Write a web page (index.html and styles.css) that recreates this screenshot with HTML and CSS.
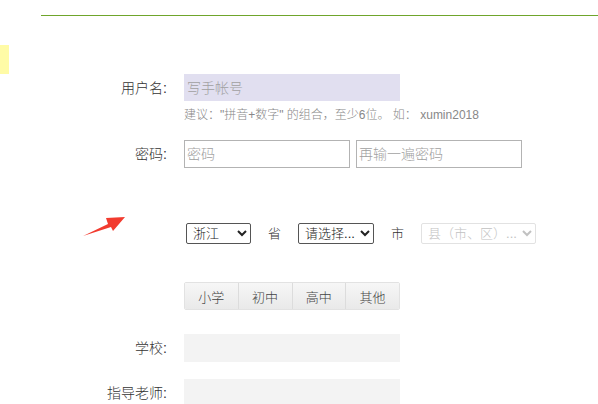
FILE: index.html
```html
<!DOCTYPE html>
<html lang="zh-CN">
<head>
<meta charset="utf-8">
<title>注册</title>
<link rel="stylesheet" href="styles.css">
</head>
<body>
<header class="topbar"><div class="topbar-line"></div></header>
<div class="page">
  <aside class="side"><div class="side-tab"></div></aside>
  <form class="form">
    <div class="row row-user">
      <label class="label">用户名:</label>
      <input class="field field-user" type="text" placeholder="写手帐号">
    </div>
    <p class="hint">建议："拼音+数字" 的组合，至少6位。 如： xumin2018</p>
    <div class="row row-pass">
      <label class="label">密码:</label>
      <div class="pair">
        <input class="field field-pass" type="password" placeholder="密码">
        <input class="field field-pass" type="password" placeholder="再输一遍密码">
      </div>
    </div>
    <div class="row row-region">
      <span class="label"></span>
      <div class="region">
        <select class="sel sel-prov"><option>浙江</option></select>
        <span class="unit">省</span>
        <select class="sel sel-city"><option>请选择...</option></select>
        <span class="unit">市</span>
        <select class="sel sel-county" disabled><option>县（市、区）...</option></select>
      </div>
    </div>
    <div class="row row-grade">
      <span class="label"></span>
      <div class="grades">
        <button type="button" class="grade">小学</button>
        <button type="button" class="grade">初中</button>
        <button type="button" class="grade">高中</button>
        <button type="button" class="grade">其他</button>
      </div>
    </div>
    <div class="row row-school">
      <label class="label">学校:</label>
      <input class="field field-grey" type="text">
    </div>
    <div class="row row-teacher">
      <label class="label">指导老师:</label>
      <input class="field field-grey" type="text">
    </div>
  </form>
</div>
<svg class="arrow" width="48" height="25" viewBox="0 0 48 25" aria-hidden="true">
  <polygon points="3,22 28,10 26,4 45,3 33,17 31,13" fill="#f23b2f"/>
</svg>
</body>
</html>
```

FILE: styles.css
```css
html, body {
  margin: 0;
  padding: 0;
  background: #ffffff;
}
body {
  font-family: "Liberation Sans", "Noto Sans CJK SC", sans-serif;
  font-size: 13px;
  font-weight: 300;
  color: #333333;
  position: relative;
  height: 404px;
  overflow: hidden;
}
.topbar {
  margin-left: 41px;
  height: 16px;
  display: flex;
  flex-direction: column;
  justify-content: flex-end;
}
.topbar-line {
  height: 1px;
  background: #6fa52b;
}
.page {
  display: flex;
}
.side {
  width: 9px;
  flex: none;
}
.side-tab {
  margin-top: 29px;
  height: 29px;
  background: #fffba6;
}
.form {
  flex: 1;
  margin: 0;
}
.row {
  display: flex;
  align-items: center;
  gap: 17px;
}
.label {
  width: 158px;
  flex: none;
  text-align: right;
  font-size: 14px;
  line-height: 18px;
  color: #333333;
}
.field {
  box-sizing: border-box;
  font-family: inherit;
  font-weight: 300;
  font-size: 14px;
  color: #333;
  outline: none;
  margin: 0;
}
.field::placeholder {
  color: #a0a0a0;
}
.row-user { margin-top: 58px; }
.field-user {
  width: 216px;
  height: 27px;
  border: none;
  background: #e1dff0;
  padding: 0 3px;
}
.hint {
  margin: 6px 0 0 175px;
  font-size: 12px;
  line-height: 16px;
  color: #888888;
}
.row-pass { margin-top: 17px; }
.pair {
  display: flex;
  gap: 6px;
}
.field-pass {
  width: 166px;
  height: 28px;
  border: 1px solid #b3b3b3;
  background: #fff;
  padding: 0 2px;
}
.row-region { margin-top: 55px; }
.region {
  display: flex;
  align-items: center;
  gap: 17px;
  margin-left: 2px;
}
.sel {
  box-sizing: border-box;
  height: 21px;
  font-family: inherit;
  font-weight: 300;
  font-size: 13px;
  color: #222;
  border: 1px solid #555;
  border-radius: 2px;
  background: #fff;
  padding: 0 0 0 2px;
  margin: 0;
}
.sel-prov { width: 65px; }
.sel-city { width: 76px; }
.sel-county {
  width: 115px;
  color: #a8a8a8;
  border-color: #d6d6d6;
}
.unit {
  font-size: 13px;
  line-height: 18px;
  color: #333;
}
.row-grade { margin-top: 38px; }
.grades {
  display: flex;
  width: 216px;
  height: 28px;
  border: 1px solid #e2e2e2;
  border-radius: 2px;
  box-sizing: border-box;
  overflow: hidden;
}
.grade {
  flex: 1;
  margin: 0;
  padding: 0;
  border: none;
  border-left: 1px solid #dcdcdc;
  background: linear-gradient(#f6f6f6, #e9e9e9);
  font-family: inherit;
  font-weight: 300;
  font-size: 13px;
  color: #444;
  cursor: pointer;
}
.grade:first-child {
  border-left: none;
}
.row-school { margin-top: 24px; }
.row-teacher { margin-top: 17px; }
.field-grey {
  width: 216px;
  height: 28px;
  border: none;
  background: #f3f3f3;
}
.arrow {
  position: absolute;
  left: 80px;
  top: 214px;
}
```
